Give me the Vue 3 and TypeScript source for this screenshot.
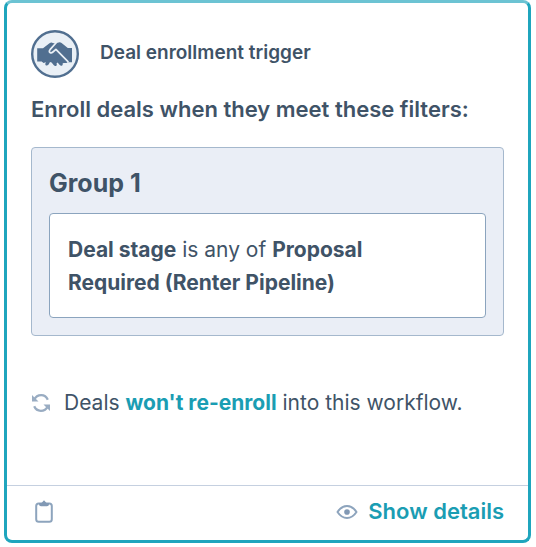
<script setup lang="ts">
interface Filter {
  property: string
  operator: string
  value: string
}

interface FilterGroup {
  name: string
  filters: Filter[]
}

const groups: FilterGroup[] = [
  {
    name: 'Group 1',
    filters: [
      { property: 'Deal stage', operator: 'is any of', value: 'Proposal Required (Renter Pipeline)' },
    ],
  },
]
</script>

<template>
  <article class="card">
    <div class="body">
      <header class="header">
        <svg class="badge" viewBox="0 0 48 48" aria-hidden="true">
          <circle cx="24" cy="24" r="22.8" fill="#eaf0f6" stroke="#516f90" stroke-width="2.4" />
          <path
            fill="#516f90"
            d="M6.200 18.200h5.800l6.500-5q1.800-1.300 3.300-.2l2.400.6 3.400-1.200q1.500-.5 3 .5l6.200 5.200h4.200v14.200h-4.600l-.8.7h-3l-1 .4q.6 1.900-.8 2.400-1.200.3-2.300-1l-1.900-2.300-1 .8q.7 2-.5 2.600-1.300.5-2.500-1l-2-2.500-1.600-.5-1.400 2.600q-1.600 1.700-2.900.7-1.200-1 .3-2.900l-2.500.6-1.800-1.400H6.200z"
          />
          <path
            d="M25.200 12.800l-6 6.600q-1.800 2.300.1 3.300 1.200.5 2.600-.7l3-2.600L37 31.600"
            fill="none"
            stroke="#eaf0f6"
            stroke-width="1.7"
            stroke-linecap="round"
            stroke-linejoin="round"
          />
        </svg>
        <span class="kind">Deal enrollment trigger</span>
      </header>

      <h1 class="heading">Enroll deals when they meet these filters:</h1>

      <section v-for="group in groups" :key="group.name" class="group">
        <h2 class="group-name">{{ group.name }}</h2>
        <p v-for="filter in group.filters" :key="filter.property" class="filter">
          <strong>{{ filter.property }}</strong> {{ filter.operator }} <strong>{{ filter.value }}</strong>
        </p>
      </section>

      <p class="enroll">
        <svg class="refresh" viewBox="0 0 20 20" aria-hidden="true">
          <g fill="none" stroke="#99acc2" stroke-width="2.3">
            <path d="M3.2 6.8Q5.3 2.2 10.2 2.2q4.6 0 6.6 4.5" />
            <path d="M16.8 13.2q-2.1 4.6-7 4.6-4.6 0-6.6-4.5" />
          </g>
          <path fill="#99acc2" d="M1 2v6.500h6.500zM19 18v-6.500h-6.500z" />
        </svg>
        <span>Deals <a class="link" href="#">won't re-enroll</a> into this workflow.</span>
      </p>
    </div>

    <footer class="footer">
      <button class="copy" type="button" aria-label="Copy">
        <svg class="clipboard" viewBox="0 0 18 24" aria-hidden="true">
          <rect x="1.2" y="3.400" width="15.6" height="18.400" rx="2.500" fill="none" stroke="#8da4bd" stroke-width="2" />
          <path fill="#8299b5" d="M4 3h2.500L9 .3 11.500 3H14v1.200q0 2-2 2H6q-2 0-2-2z" />
        </svg>
      </button>
      <button class="details" type="button">
        <svg class="eye" viewBox="0 0 22 16" aria-hidden="true">
          <path
            d="M1.500 8Q5.500 2 11 2t9.500 6Q16.500 14 11 14T1.500 8z"
            fill="none"
            stroke="#8da4bd"
            stroke-width="2"
            stroke-linejoin="round"
          />
          <circle cx="11" cy="8" r="2.8" fill="#8299b5" />
        </svg>
        Show details
      </button>
    </footer>
  </article>
</template>

<style>
body {
  background: #fff;
}
</style>

<style scoped>
.card {
  margin: 0 5px 4px 4px;
  border: 3px solid #1fa5bd;
  border-top-color: #6cc3d3;
  border-radius: 8px;
  background: #fff;
  color: #3f5367;
  font-family: Inter, "Liberation Sans", sans-serif;
  font-size: 21px;
  font-weight: 400;
  line-height: 33px;
}

.body {
  padding: 27px 24px 66px;
}

.header {
  display: flex;
  align-items: center;
  gap: 21px;
}

.badge {
  width: 48px;
  height: 48px;
}

.kind {
  font-size: 19px;
  font-weight: 600;
  line-height: 24px;
  padding-bottom: 3px;
}

.heading {
  margin: 15px 0 21px;
  font-size: 22px;
  font-weight: 600;
  line-height: 33px;
}

.group {
  padding: 18px 17px 17px;
  border: 1px solid #a5b8cd;
  border-radius: 4px;
  background: #eaeef6;
}

.group-name {
  margin: 0 0 12px;
  font-size: 25px;
  font-weight: 700;
  line-height: 35px;
}

.filter {
  margin: 0;
  padding: 19px 40px 18px 18px;
  border: 1px solid #8ba4be;
  border-radius: 4px;
  background: #fff;
}

.filter strong {
  font-weight: 700;
}

.enroll {
  display: flex;
  align-items: center;
  gap: 13px;
  margin: 50px 0 0;
}

.refresh {
  width: 20px;
  height: 20px;
}

.link {
  color: #1a9db3;
  font-weight: 700;
  text-decoration: none;
}

.footer {
  display: flex;
  align-items: center;
  justify-content: space-between;
  padding: 9px 24px 12px 28px;
  border-top: 1px solid #c5d0e0;
}

.copy,
.details {
  display: flex;
  align-items: center;
  padding: 0;
  border: 0;
  background: none;
  font: inherit;
  cursor: pointer;
}

.clipboard {
  width: 18px;
  height: 24px;
}

.details {
  gap: 10px;
  color: #1a9db3;
  font-size: 22px;
  font-weight: 600;
}

.eye {
  width: 22px;
  height: 16px;
}
</style>
